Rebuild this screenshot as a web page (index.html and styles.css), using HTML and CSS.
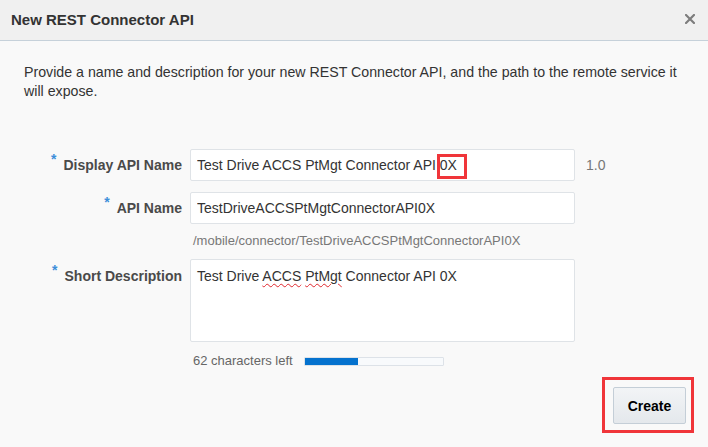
FILE: index.html
```html
<!DOCTYPE html>
<html>
<head>
<meta charset="utf-8">
<link rel="stylesheet" href="styles.css">
</head>
<body>
<div class="dialog">
  <div class="header">
    <span class="title">New REST Connector API</span>
    <span class="close">
      <svg width="10" height="10" viewBox="0 0 10 10"><path d="M1 1 L9 9 M9 1 L1 9" stroke="#7d7d7d" stroke-width="2.2" stroke-linecap="square"/></svg>
    </span>
  </div>
  <div class="content">
    <p class="intro">Provide a name and description for your new REST Connector API, and the path to the remote service it will expose.</p>
    <div class="form">
      <label class="label"><span class="req">*</span>Display API Name</label>
      <div class="field-wrap">
        <input class="field" type="text" value="Test Drive ACCS PtMgt Connector API 0X">
        <span class="mark"></span>
      </div>
      <span class="version">1.0</span>

      <label class="label"><span class="req">*</span>API Name</label>
      <div class="field-wrap">
        <input class="field" type="text" value="TestDriveACCSPtMgtConnectorAPI0X">
        <div class="path">/mobile/connector/TestDriveACCSPtMgtConnectorAPI0X</div>
      </div>
      <span></span>

      <label class="label label-top"><span class="req">*</span>Short Description</label>
      <div class="field-wrap">
        <div class="textarea">Test Drive <span class="spell">ACCS</span> <span class="spell">PtMgt</span> Connector API 0X</div>
        <div class="counter">
          <span>62 characters left</span>
          <span class="bar"><span class="fill" style="width: 53px"></span></span>
        </div>
      </div>
      <span></span>
    </div>
    <div class="footer">
      <span class="highlight"><button class="btn">Create</button></span>
    </div>
  </div>
</div>
</body>
</html>
```

FILE: styles.css
```css
* { box-sizing: border-box; }
html, body {
  margin: 0;
  padding: 0;
  width: 708px;
  height: 447px;
  overflow: hidden;
}
body {
  font-family: "Liberation Sans", Arial, sans-serif;
  background: #f9f9f9;
  color: #333;
}
.dialog {
  display: flex;
  flex-direction: column;
  height: 447px;
}
.header {
  height: 41px;
  background: #f0f0f0;
  border-bottom: 1px solid #c6d1da;
  display: flex;
  align-items: center;
  justify-content: space-between;
  padding: 0 13px 0 11px;
}
.title {
  font-size: 15px;
  font-weight: bold;
  color: #333;
  position: relative;
  top: -1px;
}
.close {
  display: flex;
  width: 10px;
  height: 10px;
  position: relative;
  top: -1px;
}
.content {
  flex: 1;
  display: flex;
  flex-direction: column;
  padding: 22px 14px 14px 24px;
}
.intro {
  margin: 0;
  font-size: 14.2px;
  line-height: 19px;
  color: #333;
  padding-right: 10px;
}
.form {
  margin-top: 48px;
  display: grid;
  grid-template-columns: 158px 385px auto;
  column-gap: 8px;
  row-gap: 10px;
  align-items: start;
}
.label {
  font-size: 14px;
  font-weight: bold;
  color: #4a4a4a;
  text-align: right;
  line-height: 33px;
  white-space: nowrap;
}
.req {
  color: #3d8fd9;
  font-size: 14px;
  font-weight: bold;
  margin-right: 7px;
  position: relative;
  top: -6px;
}
.label-top { line-height: 34px; }
.field-wrap {
  position: relative;
}
.field {
  display: block;
  width: 385px;
  height: 32px;
  border: 1px solid #dfe3e7;
  border-radius: 2px;
  background: #fff;
  padding: 0 6px;
  font-family: "Liberation Sans", Arial, sans-serif;
  font-size: 14px;
  color: #333;
  outline: none;
}
.mark {
  position: absolute;
  left: 247px;
  top: 5px;
  width: 30px;
  height: 25px;
  border: 3px solid #f0353a;
}
.version {
  font-size: 14px;
  color: #777;
  line-height: 32px;
  padding-left: 3px;
}
.path {
  font-size: 13px;
  color: #777;
  padding: 9px 0 0 3px;
  line-height: 16px;
}
.textarea {
  width: 385px;
  height: 83px;
  border: 1px solid #dfe3e7;
  border-radius: 2px;
  background: #fff;
  padding: 7px 6px;
  font-size: 14px;
  line-height: 18px;
  color: #333;
}
.spell {
  text-decoration: underline wavy #e0262c;
  text-decoration-thickness: 1px;
  text-underline-offset: 2px;
}
.counter {
  display: flex;
  align-items: center;
  gap: 11px;
  font-size: 13px;
  color: #666;
  padding: 11px 0 0 3px;
  line-height: 16px;
}
.bar {
  display: inline-block;
  width: 140px;
  height: 9px;
  border: 1px solid #dde2e8;
  border-radius: 1px;
  background: #f8fafc;
  position: relative;
}
.fill {
  display: block;
  height: 100%;
  background: #0572ce;
}
.footer {
  margin-top: auto;
  display: flex;
  justify-content: flex-end;
}
.highlight {
  display: inline-block;
  border: 3px solid #f0353a;
  padding: 7px 5px 6px 8px;
}
.btn {
  display: block;
  width: 73px;
  height: 37px;
  border: 1px solid #c4ced7;
  border-radius: 2px;
  background: linear-gradient(#f2f4f6, #e4e8ec);
  font-family: "Liberation Sans", Arial, sans-serif;
  font-size: 14px;
  font-weight: bold;
  color: #000;
  padding: 0;
}
```
